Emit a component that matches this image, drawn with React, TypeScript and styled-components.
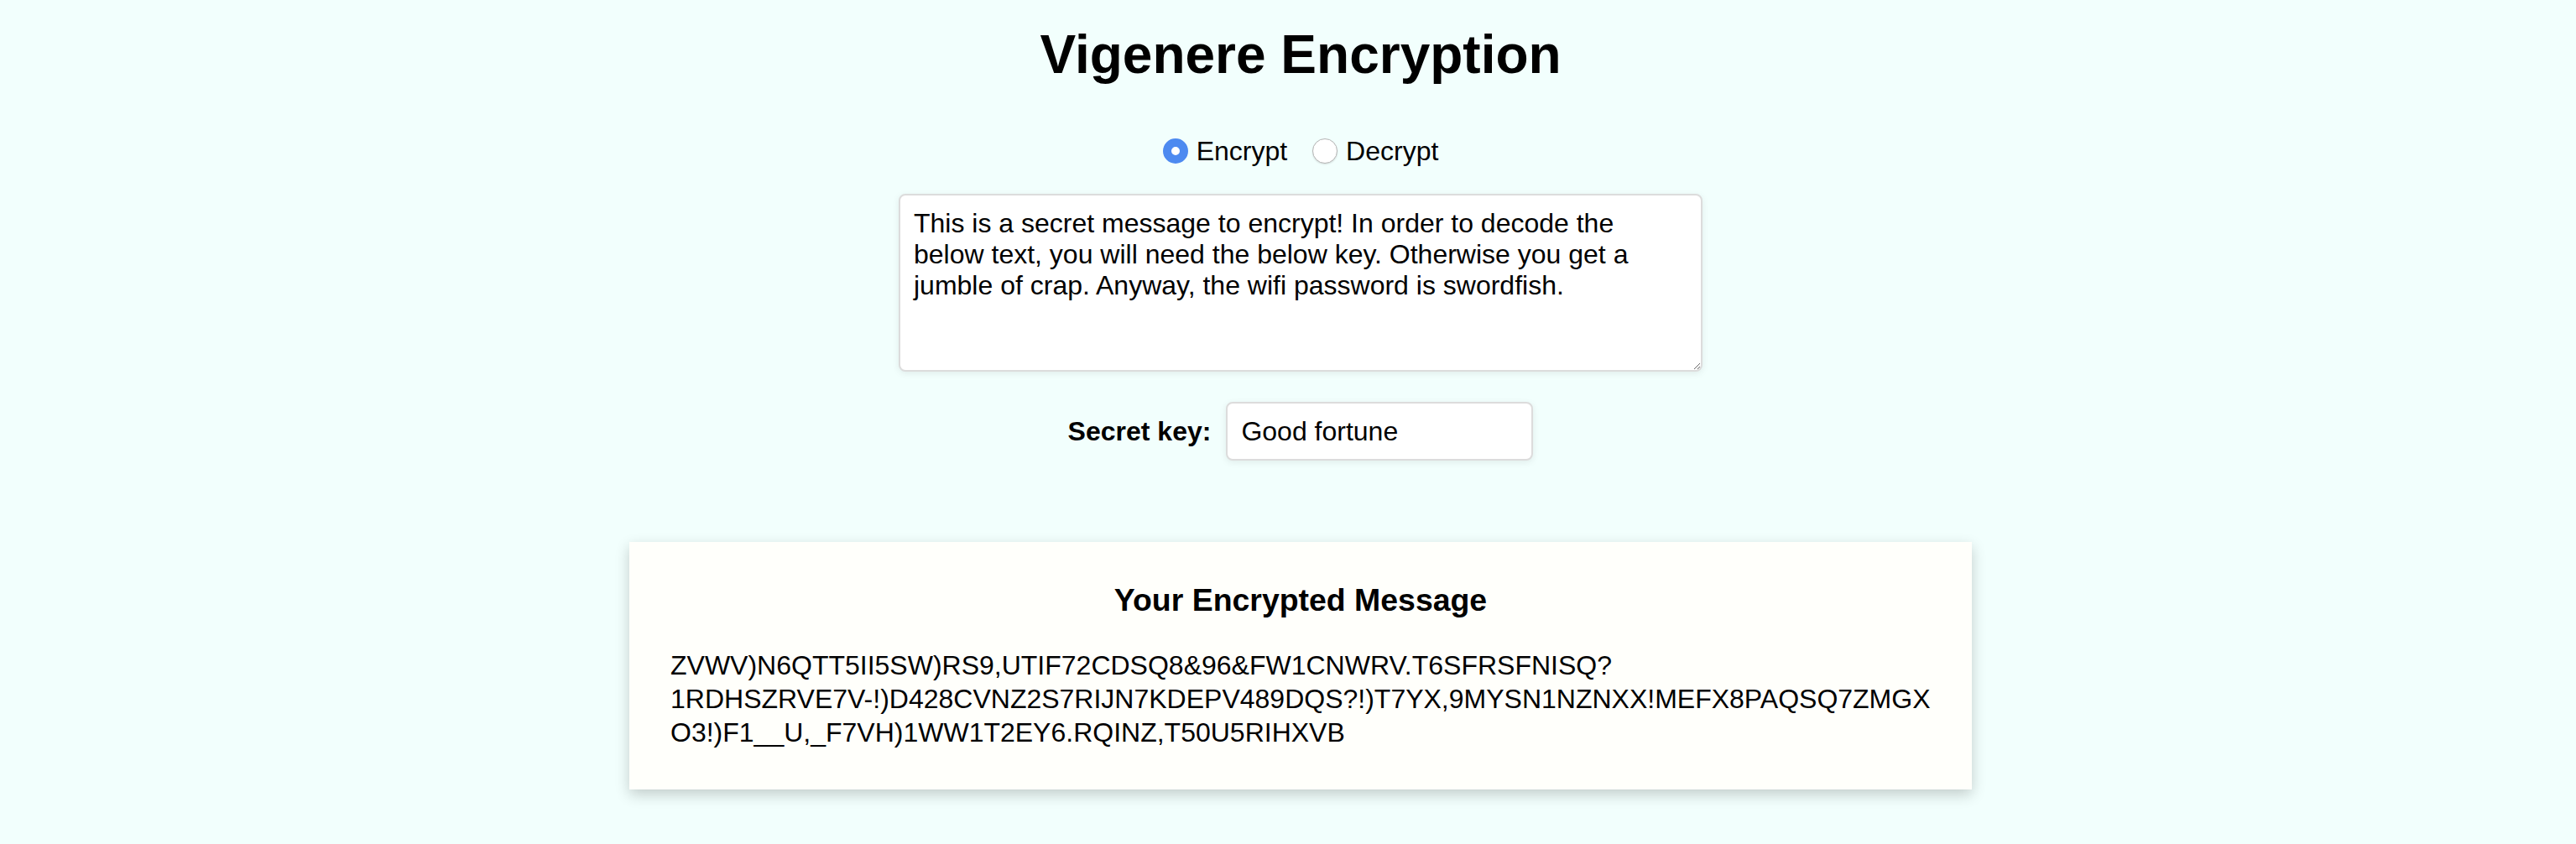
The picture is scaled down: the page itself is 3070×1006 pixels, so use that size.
import React, { useState } from 'react';
import styled, { createGlobalStyle } from 'styled-components';

const GlobalStyle = createGlobalStyle`
  html, body {
    margin: 0;
    padding: 0;
    background-color: #f2fffd;
  }
  body {
    font-family: "Liberation Sans", Arial, Helvetica, sans-serif;
    color: #000;
  }
`;

const Page = styled.main`
  display: flex;
  flex-direction: column;
  align-items: center;
  padding-left: 30px;
  padding-bottom: 60px;
`;

const Title = styled.h1`
  font-size: 64px;
  font-weight: 700;
  line-height: 1.15;
  margin: 29px 0 59px;
`;

const ModeRow = styled.div`
  display: flex;
  align-items: center;
  font-size: 32px;
  line-height: 1.15;
`;

const ModeOption = styled.label`
  display: flex;
  align-items: center;
  gap: 10px;
  cursor: pointer;

  & + & {
    margin-left: 30px;
  }
`;

const Radio = styled.input.attrs({ type: 'radio' })`
  appearance: none;
  margin: 0;
  width: 30px;
  height: 30px;
  border-radius: 50%;
  background: #fff;
  border: 1.5px solid #b5b5b5;
  box-shadow: 0 1px 2px rgba(0, 0, 0, 0.12);
  box-sizing: border-box;

  &:checked {
    border: 10px solid #4d8af0;
    box-shadow: none;
  }
`;

const MessageInput = styled.textarea`
  margin-top: 33px;
  width: 958px;
  height: 212px;
  box-sizing: border-box;
  padding: 15px 16px 12px;
  font-family: "Liberation Sans", Arial, Helvetica, sans-serif;
  font-size: 32px;
  line-height: 1.15;
  color: #000;
  background: #fff;
  border: 2px solid #dcdcdc;
  border-radius: 8px;
  box-shadow: 0 2px 8px rgba(0, 0, 0, 0.08);
  outline: none;
`;

const KeyRow = styled.div`
  display: flex;
  align-items: center;
  gap: 18px;
  margin-top: 36px;
`;

const KeyLabel = styled.label`
  font-size: 32px;
  font-weight: 700;
`;

const KeyInput = styled.input`
  width: 366px;
  height: 70px;
  box-sizing: border-box;
  padding: 0 16px;
  font-family: "Liberation Sans", Arial, Helvetica, sans-serif;
  font-size: 32px;
  color: #000;
  background: #fff;
  border: 2px solid #dcdcdc;
  border-radius: 8px;
  box-shadow: 0 2px 8px rgba(0, 0, 0, 0.08);
  outline: none;
`;

const ResultCard = styled.section`
  margin-top: 97px;
  width: 1600px;
  box-sizing: border-box;
  padding: 48px 49px;
  background: #fffffb;
  box-shadow: 0 6px 16px rgba(0, 0, 0, 0.2);
`;

const ResultTitle = styled.h3`
  margin: 0 0 36px;
  text-align: center;
  font-size: 37.44px;
  font-weight: 700;
  line-height: 1.15;
`;

const ResultText = styled.p`
  margin: 0;
  font-size: 32px;
  line-height: 40px;
`;

const cipherLines = [
  'ZVWV)N6QTT5II5SW)RS9,UTIF72CDSQ8&96&FW1CNWRV.T6SFRSFNISQ?',
  '1RDHSZRVE7V-!)D428CVNZ2S7RIJN7KDEPV489DQS?!)T7YX,9MYSN1NZNXX!MEFX8PAQSQ7ZMGX',
  'O3!)F1__U,_F7VH)1WW1T2EY6.RQINZ,T50U5RIHXVB',
];

const App: React.FC = () => {
  const [mode, setMode] = useState<'encrypt' | 'decrypt'>('encrypt');
  const [message, setMessage] = useState(
    'This is a secret message to encrypt! In order to decode the below text, you will need the below key. Otherwise you get a jumble of crap. Anyway, the wifi password is swordfish.'
  );
  const [secret, setSecret] = useState('Good fortune');

  return (
    <>
      <GlobalStyle />
      <Page>
        <Title>Vigenere Encryption</Title>

        <ModeRow>
          <ModeOption>
            <Radio
              name="mode"
              checked={mode === 'encrypt'}
              onChange={() => setMode('encrypt')}
            />
            Encrypt
          </ModeOption>
          <ModeOption>
            <Radio
              name="mode"
              checked={mode === 'decrypt'}
              onChange={() => setMode('decrypt')}
            />
            Decrypt
          </ModeOption>
        </ModeRow>

        <MessageInput value={message} onChange={e => setMessage(e.target.value)} />

        <KeyRow>
          <KeyLabel htmlFor="secret">Secret key:</KeyLabel>
          <KeyInput id="secret" value={secret} onChange={e => setSecret(e.target.value)} />
        </KeyRow>

        <ResultCard>
          <ResultTitle>
            Your {mode === 'encrypt' ? 'Encrypted' : 'Decrypted'} Message
          </ResultTitle>
          <ResultText>
            {cipherLines.map((line, i) => (
              <React.Fragment key={i}>
                {line}
                {i < cipherLines.length - 1 && <br />}
              </React.Fragment>
            ))}
          </ResultText>
        </ResultCard>
      </Page>
    </>
  );
};

export default App;
